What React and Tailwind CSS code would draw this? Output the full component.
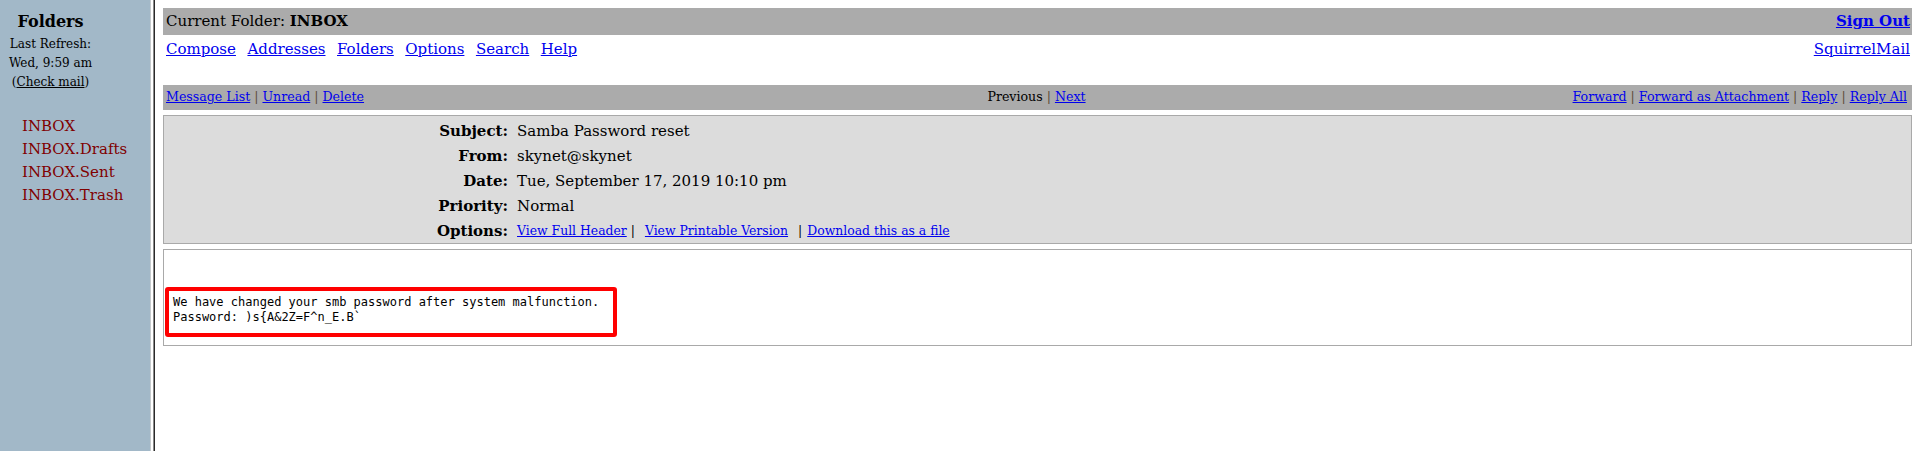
const navLinks = ["Compose", "Addresses", "Folders", "Options", "Search", "Help"];
const folders = ["INBOX", "INBOX.Drafts", "INBOX.Sent", "INBOX.Trash"];

const headerRows = [
  { label: "Subject:", value: "Samba Password reset" },
  { label: "From:", value: "skynet@skynet" },
  { label: "Date:", value: "Tue, September 17, 2019 10:10 pm" },
  { label: "Priority:", value: "Normal" },
];

function Sep() {
  return <span className="text-[#5c4a36]"> | </span>;
}

function Sidebar() {
  return (
    <aside className="w-[150px] shrink-0 bg-[#a2b8c8] pt-[12px]">
      <div className="w-[101px] text-center">
        <div className="text-[16px] font-bold leading-[20px]">Folders</div>
        <div className="mt-[3px] text-[12px] leading-[19px]">
          <div>Last Refresh:</div>
          <div>Wed, 9:59 am</div>
          <div>
            (<a className="underline">Check mail</a>)
          </div>
        </div>
      </div>
      <ul className="mt-[23px] pl-[22px] text-[15px] leading-[23px] text-[#800000]">
        {folders.map((f) => (
          <li key={f}>{f}</li>
        ))}
      </ul>
    </aside>
  );
}

export default function App() {
  return (
    <div className="flex h-[451px] w-[1920px] overflow-hidden bg-white font-['DejaVu_Serif',serif] text-black">
      <Sidebar />

      {/* frame divider */}
      <div className="flex shrink-0">
        <div className="w-px bg-[#c4c9cc]" />
        <div className="w-[2px] bg-white" />
        <div className="w-px bg-[#8a8a8a]" />
        <div className="w-px bg-[#2a2a2a]" />
      </div>

      <main className="flex-1 p-[8px]">
        {/* top bar */}
        <div className="flex h-[27px] items-center justify-between bg-[#ababab] pl-[3px] pr-[2px] text-[15px]">
          <span>
            Current Folder: <b>INBOX</b>
          </span>
          <a className="font-bold text-[#0000ee] underline">Sign Out</a>
        </div>

        {/* nav */}
        <div className="flex justify-between pl-[3px] pr-[2px] pt-[5px] text-[15px] leading-[19px]">
          <div className="flex gap-[11.5px]">
            {navLinks.map((l) => (
              <a key={l} className="text-[#0000ee] underline">
                {l}
              </a>
            ))}
          </div>
          <a className="text-[#0000ee] underline">SquirrelMail</a>
        </div>

        {/* message toolbar */}
        <div className="mt-[26px] grid h-[25px] grid-cols-[1fr_auto_1fr] items-center bg-[#ababab] pl-[3px] pr-[5px] text-[12.6px]">
          <div>
            <a className="text-[#0000ee] underline">Message List</a>
            <Sep />
            <a className="text-[#0000ee] underline">Unread</a>
            <Sep />
            <a className="text-[#0000ee] underline">Delete</a>
          </div>
          <div>
            Previous
            <Sep />
            <a className="text-[#0000ee] underline">Next</a>
          </div>
          <div className="text-right">
            <a className="text-[#0000ee] underline">Forward</a>
            <Sep />
            <a className="text-[#0000ee] underline">Forward as Attachment</a>
            <Sep />
            <a className="text-[#0000ee] underline">Reply</a>
            <Sep />
            <a className="text-[#0000ee] underline">Reply All</a>
          </div>
        </div>

        {/* headers */}
        <div className="mt-[5px] h-[129px] overflow-hidden border border-[#a9a9a9] bg-[#dcdcdc] pt-[3px] text-[15px]">
          {headerRows.map((r) => (
            <div key={r.label} className="flex h-[25px] items-center">
              <div className="w-[344px] text-right font-bold">{r.label}</div>
              <div className="pl-[9px]">{r.value}</div>
            </div>
          ))}
          <div className="flex h-[25px] items-center">
            <div className="w-[344px] text-right font-bold">Options:</div>
            <div className="pl-[9px] text-[12.4px]">
              <a className="text-[#0000ee] underline">View Full Header</a>
              <span className="ml-[4px] mr-[10px]">|</span>
              <a className="text-[#0000ee] underline">View Printable Version</a>
              <span className="ml-[10px] mr-[5px]">|</span>
              <a className="text-[#0000ee] underline">Download this as a file</a>
            </div>
          </div>
        </div>

        {/* body */}
        <div className="mt-[5px] border border-[#a9a9a9] bg-white pb-[8px] pt-[37px]">
          <div className="ml-[1px] w-[452px] rounded-[3px] border-4 border-[#ff0000] pb-[8px] pl-[4px] pt-[4px] font-['DejaVu_Sans_Mono',monospace] text-[12px] leading-[15px]">
            <div>We have changed your smb password after system malfunction.</div>
            <div>Password: )s{"{"}A&amp;2Z=F^n_E.B`</div>
          </div>
        </div>
      </main>
    </div>
  );
}
